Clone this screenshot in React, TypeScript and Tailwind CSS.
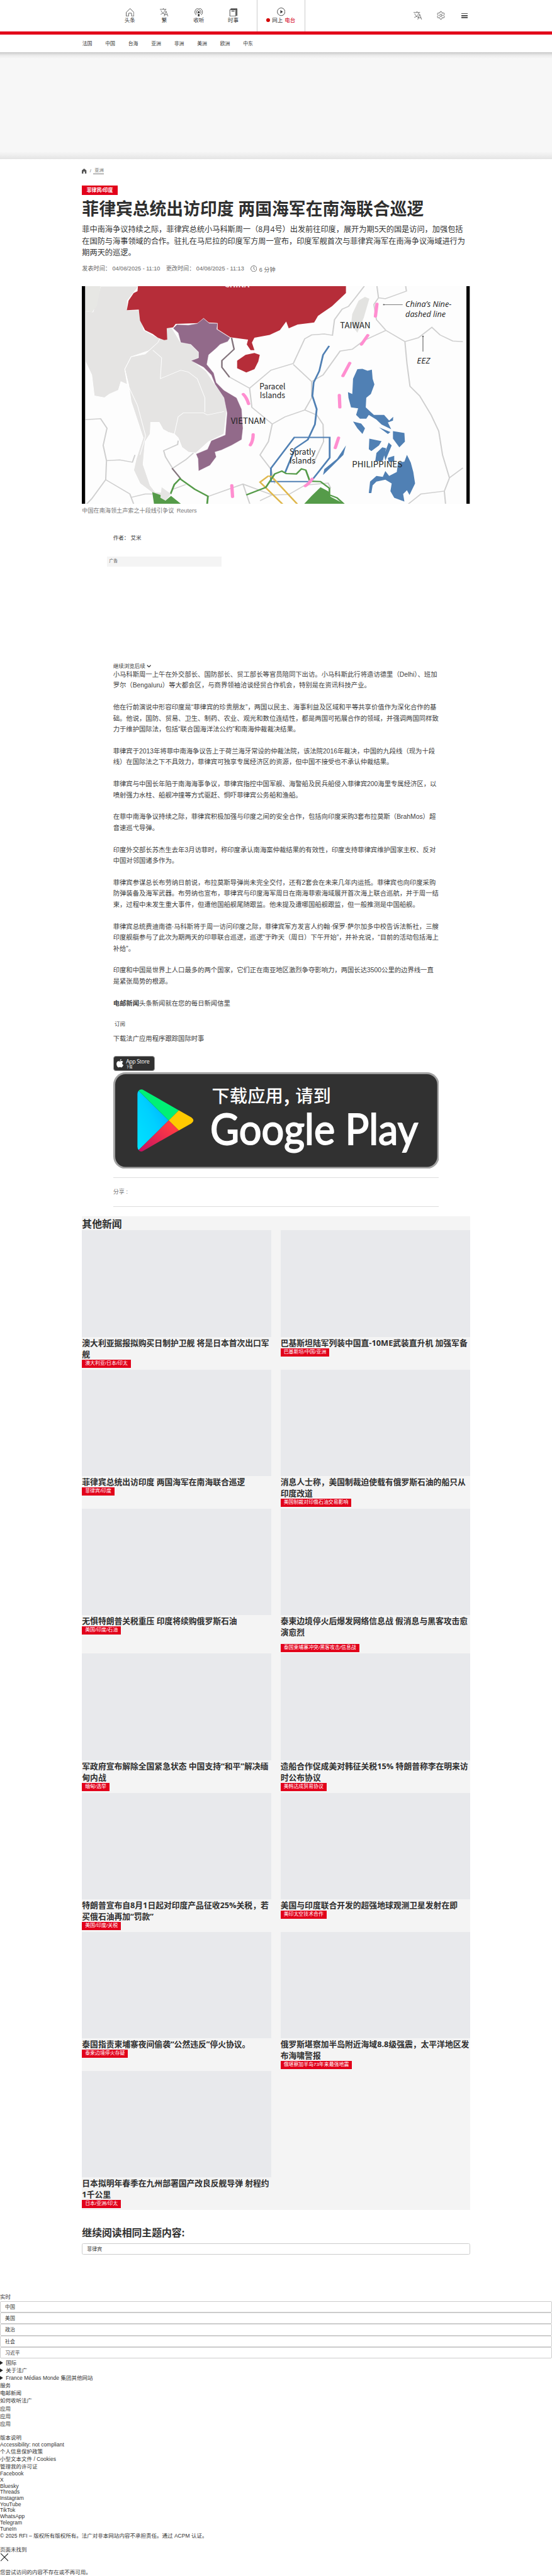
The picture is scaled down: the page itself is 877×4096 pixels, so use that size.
import React from "react";
import { Settings } from "lucide-react";

const SANS = "font-['Liberation_Sans','Noto_Sans_CJK_SC',sans-serif]";
const TITLE = "font-['Open_Sans','Noto_Sans_CJK_SC',sans-serif]";

function HomeIcon() {
  return (
    <svg viewBox="0 0 22 22" className="size-[13.4px]" fill="none" stroke="#333" strokeWidth="1.3">
      <path d="M11 1 1 11v10h6v-7q0-1 1-1h6q1 0 1 1v7h6V11z" />
    </svg>
  );
}

function TranslateIcon({ className }: { className: string }) {
  return (
    <svg viewBox="0 0 22 22" className={className} fill="none" stroke="#444" strokeWidth="1.2">
      <path d="M0 3h17M9 0v3M3 6c2 5 5 8 10 10M14 3c-1 6-5 11-12 13M11 21.500l5-14 5.200 14M13 17h6.500" />
    </svg>
  );
}

function ListenIcon() {
  return (
    <svg viewBox="0 0 22 22" className="size-[13.4px]" fill="none" stroke="#333" strokeWidth="1.300">
      <path d="M5 18A10 10 0 1 1 17 18M7 14.500A6 6 0 1 1 15 14.500" />
      <circle cx="11" cy="10.500" r="2.800" fill="#333" stroke="none" />
      <path d="M9 15h4v7H9z" fill="#333" stroke="none" />
    </svg>
  );
}

function NewsIcon() {
  return (
    <svg viewBox="0 0 22 22" className="size-[13.4px]" fill="none" stroke="#333" strokeWidth="1.400">
      <path d="M2 4h15v17H2z" />
      <path d="M4 2h16v18" strokeWidth="2.600" />
      <path d="M6 7.500h8" strokeWidth="2" />
    </svg>
  );
}

function PlayIcon() {
  return (
    <svg viewBox="0 0 22 22" className="size-[13.4px]" fill="none" stroke="#333" strokeWidth="1.400">
      <circle cx="11" cy="11" r="10" />
      <path d="M9 6.500 15.500 11 9 15.500z" fill="#333" stroke="none" />
    </svg>
  );
}

function Header() {
  const items = [
    { icon: <HomeIcon />, label: "头条" },
    { icon: <TranslateIcon className="size-[13.4px]" />, label: "繁" },
    { icon: <ListenIcon />, label: "收听" },
    { icon: <NewsIcon />, label: "时事" },
  ];
  const topics = ["法国", "中国", "台海", "亚洲", "非洲", "美洲", "欧洲", "中东"];
  return (
    <header>
      <div className="flex h-[49.9px] pl-[179px] text-[8.53px] leading-[12px] text-[#333]">
        {items.map((it) => (
          <div key={it.label} className="flex w-[54.75px] flex-col items-center pt-[12.6px]">
            {it.icon}
            <span className="mt-[0.4px]">{it.label}</span>
          </div>
        ))}
        <div className="ml-[9.5px] flex w-[77.7px] flex-col items-center border-x border-[#ccc] pt-[12.2px]">
          <PlayIcon />
          <div className="mt-[0.8px] flex items-center">
            <span className="mr-[3px] size-[6px] rounded-full bg-[#d40000]" />
            <span>网上</span>
            <span className="ml-[3px] text-[#d40019]">电台</span>
          </div>
        </div>
        <div className="ml-[172.300px] flex items-center">
          <TranslateIcon className="size-[13.4px]" />
          <Settings className="ml-[22.500px] size-[15px] text-[#444]" strokeWidth={1.300} />
          <div className="ml-[24.800px] flex w-[10px] flex-col gap-[1.800px]">
            <span className="h-[1.400px] bg-[#555]" />
            <span className="h-[1.400px] bg-[#555]" />
            <span className="h-[1.400px] bg-[#555]" />
          </div>
        </div>
      </div>
      <div className="h-[4.9px] bg-[#e2001a]" />
      <nav className="flex h-[28px] items-center gap-[20.7px] pl-[130.7px] pb-[0.500px] pt-[2px] text-[7.92px] text-[#333]">
        {topics.map((t) => (
          <a key={t}>{t}</a>
        ))}
      </nav>
    </header>
  );
}

const land = "fill-[#e5e4e3] stroke-white";
function MapText({ x, y, w, size, italic, children }: { x: number; y: number; w: number; size: number; italic?: boolean; children: string }) {
  return (
    <text
      transform={`translate(${x} ${y}) scale(0.75 1)`}
      fontSize={size}
      fill="#222"
      textLength={w / 0.75}
      lengthAdjust="spacingAndGlyphs"
      className={italic ? "font-['Open_Sans',sans-serif] italic" : ""}
    >
      {children}
    </text>
  );
}

function SeaMap() {
  return (
    <svg
      viewBox="21 14 1526 1144"
      preserveAspectRatio="none"
      className="mt-[18.9px] block h-[346.5px] w-full font-['Noto_Sans_CJK_SC',sans-serif]"
    >
      <rect x="21" y="14" width="1526" height="1144" fill="#fdfdfd" />
      <g className={land} strokeWidth="2.500">
        <path d="M35 14H245L200 90V140H245L265 245L320 285L350 300L300 340L290 350L215 385L190 450L200 530L175 515L165 560L130 580L110 600L70 590L60 480L35 410Z" />
        <path d="M350 235L375 232L410 310L450 320L480 360L480 390L455 405L510 460L550 540L590 600V680L580 790L520 830L470 890L440 885L415 860L400 810L385 790L360 780L340 765L325 728H292L290 790L270 830L262 950L290 1060L310 1095L370 1100L345 1140L300 1100L250 1050L225 980L235 920L262 810L240 720L215 620L205 530L190 450L215 385L270 370L320 310Z" />
        <path d="M190 450L205 540L240 640L272 800L250 900M300 350L335 390L330 500L410 455L440 465L475 500L505 600V675M385 790L400 700L420 680L500 680L515 690L580 672M35 145L65 150L95 14" fill="none" />
      </g>
      <path d="M35 14H95L80 120L60 150L35 145Z" fill="#e7e7e4" />
      <path d="M1135 70L1152 80L1130 180L1105 258L1080 215L1085 160L1110 90Z" fill="#e3e3e1" />
      <g fill="none" stroke="#cfcfcf" strokeWidth="5">
        <path d="M1132 14L1100 70L1070 120L1045 135L1015 190L1007 272L975 265L925 270L898 290L853 420L765 455L681 550L600 490M853 425L925 515L970 480L1037 355L1085 345L1130 300L1217 246M1182 14L1188 75L1170 110L1180 190L1217 246L1292 305L1345 285L1398 230L1430 270L1480 302L1520 305M1188 75L1215 80L1240 68L1298 40L1295 14M1292 305L1300 420L1312 540L1350 590L1395 690L1425 775L1440 900L1467 1020L1520 968M1467 1022L1447 1090L1355 1105L1305 1158M1447 1090L1452 1158M681 550L690 650L770 738L820 700L898 664L925 600V515M898 664L945 690L970 740L972 830L930 950M770 738L755 830L722 900L765 975L780 1050M35 715L95 710L120 760L105 850L118 930L170 926L220 938L230 900M118 930L115 1030L210 1105L225 1158M115 1030L60 1130L40 1158M215 1123L270 1105L310 1105M400 825L398 845L343 878L350 910L378 970M460 890L430 925L378 970M380 1080L430 1055M518 1118L655 1053L770 1110L835 1108L900 1058L990 1048L1000 1075M655 1053L682 1158M722 1140L770 1110" />
      </g>
      <path
        d="M242 14L240 40L225 50L205 90L198 140L245 137L250 195L270 245L300 265L320 285L345 297L357 295L355 235L380 230L390 212L480 208L500 182L520 205L555 208L555 240L605 282L660 292L675 295L670 320L685 350L700 350L690 310L700 285L760 270L800 245L825 200L835 235L870 215L935 205L950 170L1005 120L1060 50V14Z"
        fill="#b62d39"
      />
      <path d="M665 375L700 365L721 375L715 410L700 450L668 467L632 445V405Z" fill="#b62d39" />
      <path
        d="M380 235L395 215L440 218L475 210L500 183L522 208L555 210L552 240L605 285L595 305L565 320L550 340L520 375L513 425L540 470L550 520L580 560L630 600L650 660L655 760L650 820L610 850L570 875L545 885L550 910L525 955L480 985L478 920L470 895L515 870L530 825L585 795L592 680L580 600L545 530L530 480L500 440L450 405L480 390V360L450 320L410 310L400 260Z"
        fill="#926a8a"
        stroke="#fff"
        strokeWidth="1.500"
      />
      <path d="M610 285L620 345L572 405V440L602 492M376 970L410 1025" fill="none" stroke="#83747c" strokeWidth="6" />
      <g fill="#5080b4">
        <path d="M1105 450L1125 448L1145 458L1162 452L1165 500L1172 530L1158 580L1140 600L1138 650L1170 690L1210 690L1230 720L1246 700L1245 720L1225 730L1238 765L1200 740L1180 715L1150 690L1140 710H1115L1100 690L1108 655L1080 650L1070 600L1068 570L1085 580L1088 500Z" />
        <path d="M1088 725L1120 735L1135 760L1125 790L1105 760ZM1245 775L1290 785L1292 830L1270 860L1245 815ZM1152 815L1200 828L1190 850L1160 880L1150 870ZM1203 860L1218 865L1205 930L1175 935L1180 890ZM1228 835L1240 850L1215 930L1210 900ZM1225 915L1250 905L1250 935L1228 938ZM1190 755L1235 780L1225 790ZM1060 850L1050 900L1005 960L970 1005L975 975L1025 920Z" />
        <path d="M1150 1100L1155 1040L1180 1010L1205 1015L1215 985L1230 1010L1260 990L1265 940L1290 935L1300 900L1315 940L1325 990L1332 1050L1310 1110L1300 1085L1285 1105L1290 1145L1250 1125L1235 1090L1240 1050L1215 1030L1180 1040L1165 1060L1160 1100Z" />
      </g>
      <g fill="none" stroke="#5080b4" strokeWidth="7">
        <path d="M994 328L970 375L955 460L933 520L928 590L945 660L938 740L910 820L860 865L820 995" />
        <path d="M857 808H996V915L922 1040H765V970Z" />
      </g>
      <path d="M765 1010L870 1160M755 1010L722 1043L812 1160M755 1010L775 1020" fill="none" stroke="#dfb74c" strokeWidth="7" />
      <g fill="none" stroke="#559b49" strokeWidth="7">
        <path d="M668 1110L745 1070L780 1000L808 985L825 998L865 1000L885 973L902 980L918 1038L960 1040L995 1075V1110L1025 1125L1052 1158" />
        <path d="M370 1105L385 1055L407 1025L465 1080L517 1117L514 1158" />
      </g>
      <path d="M298 1095L330 1110L350 1140L372 1115L412 1158H305ZM895 1158L925 1115L960 1070L990 1090L1000 1120L1055 1158Z" fill="#559b49" />
      <path d="M335 1070L372 1105L350 1140L330 1125Z" fill="#e5e4e3" />
      <g fill="none" stroke="#ff8ed0" strokeWidth="13" strokeLinecap="round">
        <path d="M1182 107L1176 173M1146 272L1121 320M1075 418L1048 485M1034 586L1036 650M1031 810L1018 863M927 1026Q915 1050 900 1063M611 1060L614 1120M695 792Q695 825 684 848M656 581Q670 600 677 632" />
      </g>
      <g stroke="#555" strokeWidth="2.500" fill="#555">
        <path d="M1208 111H1283M1363 275V357" />
        <circle cx="1209" cy="111" r="2" />
        <circle cx="1363" cy="277" r="2" />
      </g>
      <MapText x={1294} y={122} w={181} size={39} italic>China’s Nine-</MapText>
      <MapText x={1294} y={176} w={158} size={39} italic>dashed line</MapText>
      <MapText x={1037} y={235} w={119} size={43}>TAIWAN</MapText>
      <MapText x={1339} y={421} w={52} size={40} italic>EEZ</MapText>
      <MapText x={720} y={557} w={102} size={42}>Paracel</MapText>
      <MapText x={721} y={602} w={100} size={42}>Islands</MapText>
      <MapText x={607} y={737} w={138} size={43}>VIETNAM</MapText>
      <MapText x={838} y={900} w={102} size={42}>Spratly</MapText>
      <MapText x={838} y={945} w={102} size={42}>Islands</MapText>
      <MapText x={1084} y={966} w={198} size={43}>PHILIPPINES</MapText>
      <text transform="translate(582 19) scale(0.75 1)" fontSize="42" fontWeight="700" fill="#f4e3e4" textLength="130" lengthAdjust="spacingAndGlyphs">CHINA</text>
      <path d="M21 14H34V1158H21ZM1534 14H1547V1158H1534Z" fill="#000" />
    </svg>
  );
}

const paragraphs: string[][] = [
  [
    "小马科斯周一上午在外交部长、国防部长、贸工部长等官员陪同下出访。小马科斯此行将造访德里（Delhi）、班加",
    "罗尔（Bengaluru）等大都会区，与商界领袖洽谈经贸合作机会，特别是在资讯科技产业。",
  ],
  [
    "他在行前演说中形容印度是“菲律宾的珍贵朋友”，两国以民主、海事利益及区域和平等共享价值作为深化合作的基",
    "础。他说，国防、贸易、卫生、制药、农业、观光和数位连结性，都是两国可拓展合作的领域，并强调两国同样致",
    "力于维护国际法，包括“联合国海洋法公约”和南海仲裁裁决结果。",
  ],
  [
    "菲律宾于2013年将菲中南海争议告上于荷兰海牙常设的仲裁法院，该法院2016年裁决，中国的九段线（现为十段",
    "线）在国际法之下不具效力，菲律宾可独享专属经济区的资源，但中国不接受也不承认仲裁结果。",
  ],
  [
    "菲律宾与中国长年陷于南海海事争议，菲律宾指控中国军舰、海警船及民兵船侵入菲律宾200海里专属经济区，以",
    "喷射强力水柱、船舰冲撞等方式驱赶、恫吓菲律宾公务船和渔船。",
  ],
  [
    "在菲中南海争议持续之际，菲律宾积极加强与印度之间的安全合作，包括向印度采购3套布拉莫斯（BrahMos）超",
    "音速巡弋导弹。",
  ],
  [
    "印度外交部长苏杰生去年3月访菲时，称印度承认南海案仲裁结果的有效性，印度支持菲律宾维护国家主权、反对",
    "中国对邻国诸多作为。",
  ],
  [
    "菲律宾参谋总长布劳纳日前说，布拉莫斯导弹尚未完全交付，还有2套会在未来几年内运抵。菲律宾也向印度采购",
    "防弹装备及海军武器。布劳纳也宣布，菲律宾与印度海军周日在南海菲索海域展开首次海上联合巡航，并于周一结",
    "束，过程中未发生重大事件，但遭他国船舰尾随跟监。他未提及遭哪国船舰跟监，但一般推测是中国船舰。",
  ],
  [
    "菲律宾总统费迪南德·马科斯将于周一访问印度之际，菲律宾军方发言人约翰·保罗·萨尔加多中校告诉法新社，三艘",
    "印度舰艇参与了此次为期两天的印菲联合巡逻，巡逻“于昨天（周日）下午开始”，并补充说，“目前的活动包括海上",
    "补给”。",
  ],
  [
    "印度和中国是世界上人口最多的两个国家，它们正在南亚地区激烈争夺影响力，两国长达3500公里的边界线一直",
    "是紧张局势的根源。",
  ],
];

function Lines({ lines }: { lines: string[] }) {
  return (
    <>
      {lines.map((l) => (
        <span key={l} className="block whitespace-nowrap">
          {l}
        </span>
      ))}
    </>
  );
}

function GooglePlayBadge() {
  return (
    <svg viewBox="0 0 850 252" className="mt-[1.8px] block h-[153.5px] w-full">
      <defs>
        <linearGradient id="gpBlue" x1="1" y1="0" x2="0" y2="1">
          <stop offset="0" stopColor="#00a6ff" />
          <stop offset="0.500" stopColor="#00d0ff" />
          <stop offset="1" stopColor="#00e3ff" />
        </linearGradient>
        <linearGradient id="gpRed" x1="1" y1="0" x2="0" y2="1">
          <stop offset="0.200" stopColor="#ff3a44" />
          <stop offset="1" stopColor="#c31162" />
        </linearGradient>
      </defs>
      <rect width="850" height="252" rx="32" fill="#a2a2a2" />
      <rect x="5" y="5" width="840" height="242" rx="27" fill="#313131" />
      <path d="M66 48Q63 52 63 57V194Q63 200 66 203L144.500 125.700Z" fill="url(#gpBlue)" />
      <path d="M66 48Q72 42 80 47L171 99.300L144.500 125.700Z" fill="#00f076" />
      <path d="M171 99.300L203 117.500Q215 125.700 203 134L171 151.700L144.500 125.700Z" fill="#ffc900" />
      <path d="M66 203Q72 210 80 204L171 151.700L144.500 125.700Z" fill="url(#gpRed)" />
      <g fill="#fff" className="font-['Noto_Sans_CJK_SC',sans-serif] font-medium">
        <text x="257" y="79" fontSize="46.500">下载应用</text>
        <text x="445" y="79" fontSize="46.500" fontWeight="700">,</text>
        <text x="475" y="79" fontSize="46.500">请到</text>
      </g>
      <text x="253" y="189" fontSize="111" fill="#fff" stroke="#fff" strokeWidth="3" textLength="542" lengthAdjust="spacingAndGlyphs" className="font-['Lato',sans-serif]">
        Google Play
      </text>
    </svg>
  );
}

function AppStoreBadge() {
  return (
    <div className="mt-[18.1px] flex h-[24.4px] w-[66px] items-center rounded-[4px] border border-[#999] bg-[#313131] pl-[4.500px] text-white">
      <svg viewBox="0 0 18 22" className="h-[13.400px] w-[11.200px]" fill="#fff">
        <path d="M12.500 0C12.800 2 11 4.600 8.900 4.700 8.600 2.600 10.600.3 12.500 0ZM9 6C10 6 11 5 13 5c1.800 0 3.400 1 4.200 2.300-3.600 2.200-3 6.800.8 8.200C17 18 15 21.700 13 21.800c-1.500 0-2-.9-3.900-.9s-2.500.9-3.900.9C2.500 21.700 0 16.500 0 12.300 0 8 2.500 5.400 5.200 5.200 6.800 5.200 8 6 9 6Z" />
      </svg>
      <div className="ml-[3.800px] flex flex-col">
        <span className={`text-[8.800px] leading-[10px] tracking-[-0.350px] whitespace-nowrap ${TITLE}`}>App Store</span>
        <span className="text-[5.200px] leading-[6px]">下载</span>
      </div>
    </div>
  );
}

type Story = { title: string[]; tag: string; spaced?: boolean };
const stories: Story[] = [
  { title: ["澳大利亚据报拟购买日制护卫舰 将是日本首次出口军", "舰"], tag: "澳大利亚/日本/印太" },
  { title: ["巴基斯坦陆军列装中国直-10ME武装直升机 加强军备"], tag: "巴基斯坦/中国/亚洲" },
  { title: ["菲律宾总统出访印度 两国海军在南海联合巡逻"], tag: "菲律宾/印度" },
  { title: ["消息人士称，美国制裁迫使载有俄罗斯石油的船只从", "印度改道"], tag: "美国制裁对印俄石油交易影响" },
  { title: ["无惧特朗普关税重压 印度将续购俄罗斯石油"], tag: "美国/印度/石油" },
  { title: ["泰柬边境停火后爆发网络信息战 假消息与黑客攻击愈", "演愈烈"], tag: "泰国柬埔寨冲突/黑客攻击/信息战", spaced: true },
  { title: ["军政府宣布解除全国紧急状态 中国支持“和平”解决缅", "甸内战"], tag: "缅甸/选举" },
  { title: ["造船合作促成美对韩征关税15% 特朗普称李在明来访", "时公布协议"], tag: "美韩达成贸易协议" },
  { title: ["特朗普宣布自8月1日起对印度产品征收25%关税，若", "买俄石油再加“罚款”"], tag: "美国/印度/关税" },
  { title: ["美国与印度联合开发的超强地球观测卫星发射在即"], tag: "美印太空技术合作" },
  { title: ["泰国指责柬埔寨夜间偷袭“公然违反”停火协议。"], tag: "泰柬边境停火存疑" },
  { title: ["俄罗斯堪察加半岛附近海域8.8级强震，太平洋地区发", "布海啸警报"], tag: "俄堪察加半岛73年来最强地震" },
  { title: ["日本拟明年春季在九州部署国产改良反舰导弹 射程约", "1千公里"], tag: "日本/亚洲/印太" },
];

function StoryCard({ story }: { story: Story }) {
  return (
    <article className="flex min-h-[221.080px] flex-col items-start">
      <div className="h-[169.300px] w-full bg-[#e8e9ec]" />
      <h3 className={`text-[12.790px] font-bold leading-[18.270px] text-[#2f2f2f] ${TITLE}`}>
        <Lines lines={story.title} />
      </h3>
      <span
        className={`whitespace-nowrap bg-[#e2001a] px-[4.870px] text-[7.920px] leading-[12.800px] text-white ${story.spaced ? "mb-[2.700px] mt-[9.500px]" : ""}`}
      >
        {story.tag}
      </span>
    </article>
  );
}

type Row = { text: string; latin?: boolean; marker?: boolean };
const footerTop: Row[] = [
  { text: "国际", marker: true },
  { text: "关于法广", marker: true },
  { text: "France Médias Monde 集团其他网站", marker: true },
  { text: "服务" },
  { text: "电邮新闻" },
  { text: "如何收听法广" },
  { text: "应用" },
  { text: "应用" },
  { text: "应用" },
];
const footerBottom: Row[] = [
  { text: "版本说明" },
  { text: "Accessibility: not compliant", latin: true },
  { text: "个人信息保护政策" },
  { text: "小型文本文件 / Cookies" },
  { text: "管理我的许可证" },
  ...["Facebook", "X", "Bluesky", "Threads", "Instagram", "YouTube", "TikTok", "WhatsApp", "Telegram", "TuneIn"].map(
    (text) => ({ text, latin: true }),
  ),
  { text: "© 2025 RFI – 版权所有版权所有。法广对非本网站内容不承担责任。通过 ACPM 认证。" },
];

function FooterRow({ row }: { row: Row }) {
  return (
    <div className={`flex items-center whitespace-nowrap ${row.latin ? "h-[9.740px]" : "h-[12.180px]"}`}>
      {row.marker && (
        <svg viewBox="0 0 8 8" className="mr-[4.500px] h-[6.200px] w-[4.800px]" preserveAspectRatio="none">
          <path d="M0 0 8 4 0 8Z" fill="#222" />
        </svg>
      )}
      <span>{row.text}</span>
    </div>
  );
}

function Footer() {
  return (
    <footer className="pt-[61.600px] text-[8.530px] leading-none text-[#333]">
      <FooterRow row={{ text: "实时" }} />
      {["中国", "美国", "政治", "社会", "习近平"].map((t) => (
        <div key={t} className="flex h-[18.270px] items-center rounded-[2px] border border-[#ccc] pl-[7px] pt-[1.500px] text-[7.920px]">
          {t}
        </div>
      ))}
      <div className="pt-[0.600px]">
        {footerTop.map((r, i) => (
          <FooterRow key={i} row={r} />
        ))}
      </div>
      <div className="pt-[9.800px]">
        {footerBottom.map((r) => (
          <FooterRow key={r.text} row={r} />
        ))}
      </div>
      <div className="pt-[9.700px]">
        <FooterRow row={{ text: "页面未找到" }} />
        <svg viewBox="0 0 20 20" className="ml-[0.600px] mt-[0.600px] block size-[12.200px]" stroke="#111" strokeWidth="1.700">
          <path d="M0 0 20 20M20 0 0 20" />
        </svg>
        <div className="pt-[11.200px]">
          <FooterRow row={{ text: "您尝试访问的内容不存在或不再可用。" }} />
        </div>
      </div>
    </footer>
  );
}

export default function App() {
  return (
    <div className={`h-[4096px] w-[877px] overflow-hidden bg-white text-[#333] ${SANS}`}>
      <Header />
      <div className="flex h-[170.600px] flex-col justify-between bg-[#f7f7f7]">
        <div className="h-[10px] bg-linear-to-b from-[#c9c9c9] via-[#ebebeb] to-[#f7f7f7]" />
        <div className="h-[12px] bg-linear-to-b from-[#f7f7f7] to-[#e4e4e4]" />
      </div>
      <main className="mx-auto w-[616.300px]">
        <div className="mt-[10.800px] flex h-[16px] items-center text-[7.310px] leading-[8.500px] text-[#666]">
          <svg viewBox="0 0 12 13" className="mb-[1px] h-[7.900px] w-[7.300px]" fill="#555">
            <path d="M6 0 0 5v8h4V8h4v5h4V5z" />
          </svg>
          <span className="ml-[5px]">/</span>
          <span className="ml-[3.500px] border-b border-[#777] pl-[2px]">亚洲</span>
        </div>
        <div className="mt-[14.600px] flex">
          <span className="bg-[#e2001a] px-[7.300px] text-[7.920px] font-bold leading-[15.200px] text-white">菲律宾/印度</span>
        </div>
        <h1 className={`mt-[5.900px] whitespace-nowrap text-[26.800px] font-bold leading-[32px] text-[#2f2f2f] ${TITLE}`}>
          菲律宾总统出访印度 两国海军在南海联合巡逻
        </h1>
        <p className={`mt-[8.400px] text-[12.180px] leading-[18.270px] ${TITLE}`}>
          <Lines
            lines={[
              "菲中南海争议持续之际，菲律宾总统小马科斯周一（8月4号）出发前往印度，展开为期5天的国是访问，加强包括",
              "在国防与海事领域的合作。驻扎在马尼拉的印度军方周一宣布，印度军舰首次与菲律宾海军在南海争议海域进行为",
              "期两天的巡逻。",
            ]}
          />
        </p>
        <div className="mt-[9px] flex h-[16px] items-center whitespace-nowrap text-[9.140px] leading-none text-[#666]">
          <span className="w-[48.100px]">发表时间：</span>
          <span className="w-[85.300px]">04/08/2025 - 11:10</span>
          <span className="w-[48.100px]">更改时间：</span>
          <span className="w-[86px]">04/08/2025 - 11:13</span>
          <svg viewBox="0 0 17 17" className="mb-[2px] size-[10.400px]" fill="none" stroke="#666" strokeWidth="1.500">
            <circle cx="8.500" cy="8.500" r="7.600" />
            <path d="M8.500 3.500v5.500l3 2.500" />
          </svg>
          <span className="ml-[3.500px] pt-[4px]">6 分钟</span>
        </div>
        <SeaMap />
        <div className="mt-[4.500px] flex h-[14px] items-center text-[9.140px] leading-none text-[#777]">
          <span>中国在南海领土声索之十段线引争议</span>
          <span className="ml-[4.300px]">Reuters</span>
        </div>
        <div className="mt-[28.400px] flex h-[14px] items-center pl-[49.300px] text-[8.530px] leading-none">作者： 艾米</div>
        <div className="ml-[39.200px] mt-[22.700px] flex h-[15.500px] w-[182.700px] items-center bg-[#f4f4f4] pl-[4px] text-[6.700px] leading-none text-[#555]">
          广告
        </div>

        <div className="mx-auto w-[517.700px]">
          <div className="mt-[153.700px] flex h-[9.600px] items-center text-[8.530px] leading-none">
            <span>继续浏览后续</span>
            <svg viewBox="0 0 12 8" className="ml-[2.600px] h-[4.600px] w-[7.300px]" fill="none" stroke="#333" strokeWidth="2.200">
              <path d="M1 1 6 6.500 11 1" />
            </svg>
          </div>
          <div className="text-[10.350px] leading-[17.600px] text-[#404040]">
            {paragraphs.map((p) => (
              <p key={p[0]} className="mb-[17.050px]">
                <Lines lines={p} />
              </p>
            ))}
            <p>
              <b>电邮新闻</b>头条新闻就在您的每日新闻信里
            </p>
            <div className="mt-[17.800px] flex h-[14px] items-center pl-[2.400px] text-[8.530px]">订阅</div>
            <p className="mt-[7px]">下载法广应用程序跟踪国际时事</p>
          </div>
          <AppStoreBadge />
          <GooglePlayBadge />
          <div className="mt-[14px] flex h-[47px] items-center border-y border-[#ddd] text-[9.140px] text-[#777]">分享 :</div>
        </div>

        <section className="mt-[14.500px] bg-[#f4f4f4]">
          <h2 className={`h-[22.500px] text-[15.830px] font-bold leading-[24px] text-[#2f2f2f] ${TITLE}`}>其他新闻</h2>
          <div className="grid grid-cols-2 gap-x-[14.600px]">
            {stories.map((s) => (
              <StoryCard key={s.title[0]} story={s} />
            ))}
          </div>
        </section>

        <h2 className={`mt-[26.500px] h-[20px] text-[15.830px] font-bold leading-[20px] text-[#2f2f2f] ${TITLE}`}>继续阅读相同主题内容:</h2>
        <div className="mt-[6.500px] flex h-[18.300px] items-center rounded-[2.500px] border border-[#ccc] pl-[7px] pt-[1.500px] text-[7.920px] leading-none">
          菲律宾
        </div>
      </main>
      <Footer />
    </div>
  );
}
